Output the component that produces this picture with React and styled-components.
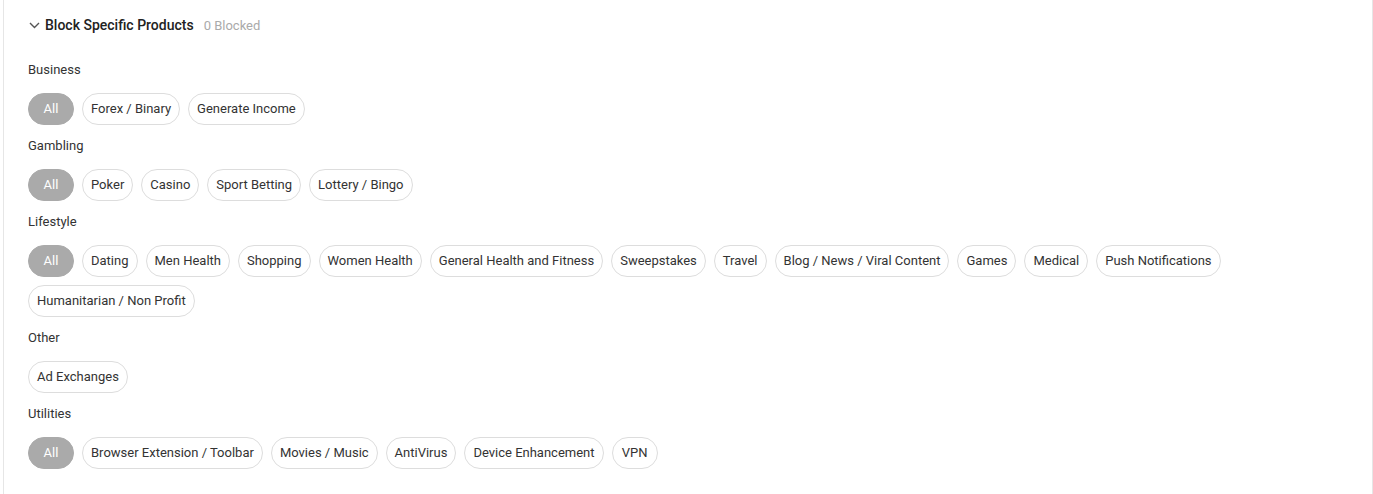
import React from "react";
import styled, { createGlobalStyle } from "styled-components";

const Global = createGlobalStyle`
  html, body { margin: 0; padding: 0; background: #fff; }
  body { font-family: Roboto, "Liberation Sans", Arial, sans-serif; }
  * { box-sizing: border-box; }
`;

const Page = styled.div`
  padding: 0 0 0 3px;
  width: 1373px;
`;

const Card = styled.div`
  width: 1370px;
  min-height: 494px;
  background: #fff;
  border-left: 1px solid #e6e6e6;
  border-right: 1px solid #e6e6e6;
  padding: 0 24px;
`;

const Header = styled.div`
  height: 50px;
  display: flex;
  align-items: center;
`;

const Chevron = styled.svg`
  width: 12px;
  height: 12px;
  margin-right: 5px;
  flex: none;
`;

const Title = styled.span`
  font-size: 14px;
  font-weight: 500;
  color: #222;
`;

const Count = styled.span`
  font-size: 13px;
  color: #aaa;
  margin-left: 10px;
  margin-top: 1px;
`;

const Body = styled.div`
  padding-top: 11px;
`;

const Section = styled.div`
  margin-bottom: 12px;
`;

const Label = styled.div`
  font-size: 13px;
  line-height: 18px;
  color: #333;
  margin-bottom: 14px;
`;

const ChipRow = styled.div`
  display: flex;
  flex-wrap: wrap;
  gap: 8px;
`;

const Chip = styled.button`
  height: 32px;
  min-width: 46px;
  padding: 0 8px;
  border-radius: 16px;
  border: 1px solid ${(p) => (p.$active ? "#aaaaaa" : "#dddddd")};
  background: ${(p) => (p.$active ? "#aaaaaa" : "#fff")};
  color: ${(p) => (p.$active ? "#fff" : "#333")};
  font-family: Roboto, "Liberation Sans", Arial, sans-serif;
  font-size: 13px;
  line-height: 30px;
  white-space: nowrap;
  cursor: pointer;
`;

const groups = [
  { name: "Business", all: true, items: ["Forex / Binary", "Generate Income"] },
  { name: "Gambling", all: true, items: ["Poker", "Casino", "Sport Betting", "Lottery / Bingo"] },
  {
    name: "Lifestyle",
    all: true,
    items: [
      "Dating",
      "Men Health",
      "Shopping",
      "Women Health",
      "General Health and Fitness",
      "Sweepstakes",
      "Travel",
      "Blog / News / Viral Content",
      "Games",
      "Medical",
      "Push Notifications",
      "Humanitarian / Non Profit",
    ],
  },
  { name: "Other", all: false, items: ["Ad Exchanges"] },
  {
    name: "Utilities",
    all: true,
    items: ["Browser Extension / Toolbar", "Movies / Music", "AntiVirus", "Device Enhancement", "VPN"],
  },
];

const Wrap = styled.div`
  width: 1200px;
`;

export default function App() {
  return (
    <>
      <Global />
      <Page>
        <Card>
          <Header>
            <Chevron viewBox="0 0 12 12">
              <polyline points="2,4 6.5,8.5 11,4" fill="none" stroke="#555" strokeWidth="1.4" />
            </Chevron>
            <Title>Block Specific Products</Title>
            <Count>0 Blocked</Count>
          </Header>
          <Body>
            {groups.map((g) => (
              <Section key={g.name}>
                <Label>{g.name}</Label>
                <Wrap>
                  <ChipRow>
                    {g.all && <Chip $active>All</Chip>}
                    {g.items.map((it) => (
                      <Chip key={it}>{it}</Chip>
                    ))}
                  </ChipRow>
                </Wrap>
              </Section>
            ))}
          </Body>
        </Card>
      </Page>
    </>
  );
}
